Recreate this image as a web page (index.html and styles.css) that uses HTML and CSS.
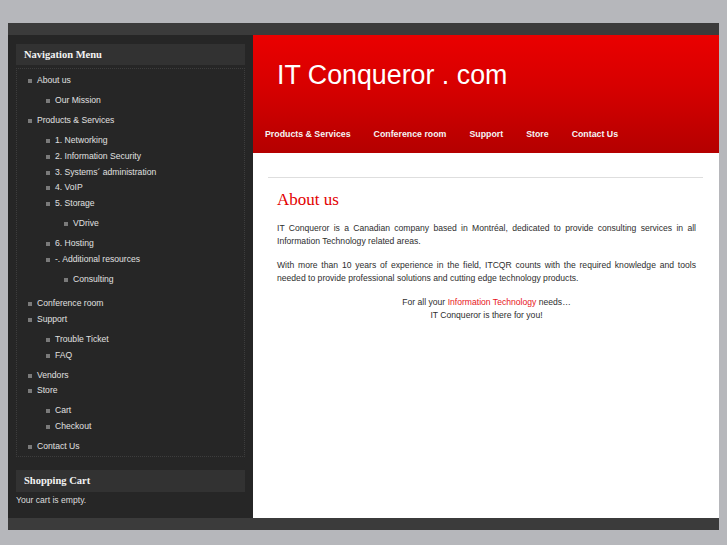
FILE: index.html
```html
<!DOCTYPE html>
<html>
<head>
<meta charset="utf-8">
<title>IT Conqueror . com</title>
<link rel="stylesheet" href="styles.css">
</head>
<body>
<div class="page">
  <div class="topbar"></div>
  <div class="layout">
    <aside class="sidebar">
      <h2 class="box-title">Navigation Menu</h2>
      <div class="menu">
        <ul class="lvl1">
          <li>About us
            <ul><li>Our Mission</li></ul>
          </li>
          <li>Products &amp; Services
            <ul>
              <li>1. Networking</li>
              <li>2. Information Security</li>
              <li>3. Systems´ administration</li>
              <li>4. VoIP</li>
              <li>5. Storage
                <ul><li>VDrive</li></ul>
              </li>
              <li>6. Hosting</li>
              <li>-. Additional resources
                <ul><li>Consulting</li></ul>
              </li>
            </ul>
          </li>
          <li>Conference room</li>
          <li>Support
            <ul>
              <li>Trouble Ticket</li>
              <li>FAQ</li>
            </ul>
          </li>
          <li>Vendors</li>
          <li>Store
            <ul>
              <li>Cart</li>
              <li>Checkout</li>
            </ul>
          </li>
          <li>Contact Us</li>
        </ul>
      </div>
      <h2 class="box-title cart-title">Shopping Cart</h2>
      <p class="cart-text">Your cart is empty.</p>
    </aside>
    <main class="main">
      <header class="header">
        <h1 class="site-title">IT Conqueror . com</h1>
        <nav class="nav">
          <a>Products &amp; Services</a>
          <a>Conference room</a>
          <a>Support</a>
          <a>Store</a>
          <a>Contact Us</a>
        </nav>
      </header>
      <section class="content">
        <div class="rule"></div>
        <div class="article">
          <h2 class="heading">About us</h2>
          <p class="justify">IT Conqueror is a Canadian company based in Montréal, dedicated to provide consulting services in all Information Technology related areas.</p>
          <p class="justify">With more than 10 years of experience in the field, ITCQR counts with the required knowledge and tools needed to provide professional solutions and cutting edge technology products.</p>
          <p class="center">For all your <span class="red">Information Technology</span> needs…<br>IT Conqueror is there for you!</p>
        </div>
      </section>
    </main>
  </div>
  <div class="bottombar"></div>
</div>
</body>
</html>
```

FILE: styles.css
```css
* { box-sizing: border-box; }
body {
  margin: 0;
  background: #b6b7bb;
  font-family: "Liberation Sans", Arial, sans-serif;
}
.page {
  width: 711px;
  margin: 23px 0 15px 8px;
}
.topbar, .bottombar {
  height: 12px;
  background: #3b3b3b;
}
.layout {
  display: flex;
  height: 483px;
}
.sidebar {
  width: 245px;
  background: #262626;
  padding: 9px 8px 0 8px;
  color: #dcdcdc;
}
.box-title {
  margin: 0;
  height: 21px;
  background: #323232;
  font-family: "Liberation Serif", "Times New Roman", serif;
  font-weight: bold;
  font-size: 10.5px;
  line-height: 21px;
  color: #f2f2f2;
  padding-left: 8px;
}
.menu {
  margin-top: 3px;
  height: 389px;
  border: 1px dotted #3d3d3d;
  padding: 4px 0 0 11px;
}
.menu ul {
  list-style: none;
  margin: 0;
  padding: 0;
}
.menu ul ul {
  padding: 4px 0 4px 9px;
}
.menu li {
  font-size: 8.6px;
  line-height: 15.9px;
  position: relative;
  padding-left: 9px;
  color: #e0e0e0;
}
.menu li::before {
  content: "";
  position: absolute;
  left: 0;
  top: 6px;
  width: 4px;
  height: 4px;
  background: #7a7a7a;
}
.cart-title {
  margin-top: 13px;
  height: 22px;
  line-height: 22px;
}
.cart-text {
  margin: 3px 0 0 0;
  font-size: 8.6px;
  line-height: 10px;
  color: #dcdcdc;
}
.main {
  width: 466px;
  background: #ffffff;
}
.header {
  height: 118px;
  background: linear-gradient(to bottom, #ea0000 0%, #d60000 45%, #b40000 100%);
  padding: 25px 0 0 12px;
  color: #fff;
}
.site-title {
  margin: 0 0 0 12px;
  font-weight: normal;
  font-size: 26.8px;
  line-height: 30px;
  color: #ffffff;
}
.nav {
  display: flex;
  margin-top: 36px;
}
.nav a {
  font-size: 8.8px;
  font-weight: bold;
  line-height: 16px;
  color: #f4f4f4;
  margin-right: 23px;
}
.content {
  padding: 24px 16px 0 15px;
}
.rule {
  border-top: 1px solid #dedede;
}
.article {
  padding: 0 7px 0 9px;
  color: #2e2e2e;
  font-size: 8.6px;
  line-height: 13px;
}
.heading {
  margin: 12px 0 0 0;
  font-family: "Liberation Serif", "Times New Roman", serif;
  font-weight: normal;
  font-size: 17px;
  line-height: 20px;
  color: #e30000;
}
.article p {
  margin: 11px 0 0 0;
}
.article p:first-of-type {
  margin-top: 11.5px;
}
.justify { text-align: justify; }
.center { text-align: center; }
.red { color: #e8141a; }
```
